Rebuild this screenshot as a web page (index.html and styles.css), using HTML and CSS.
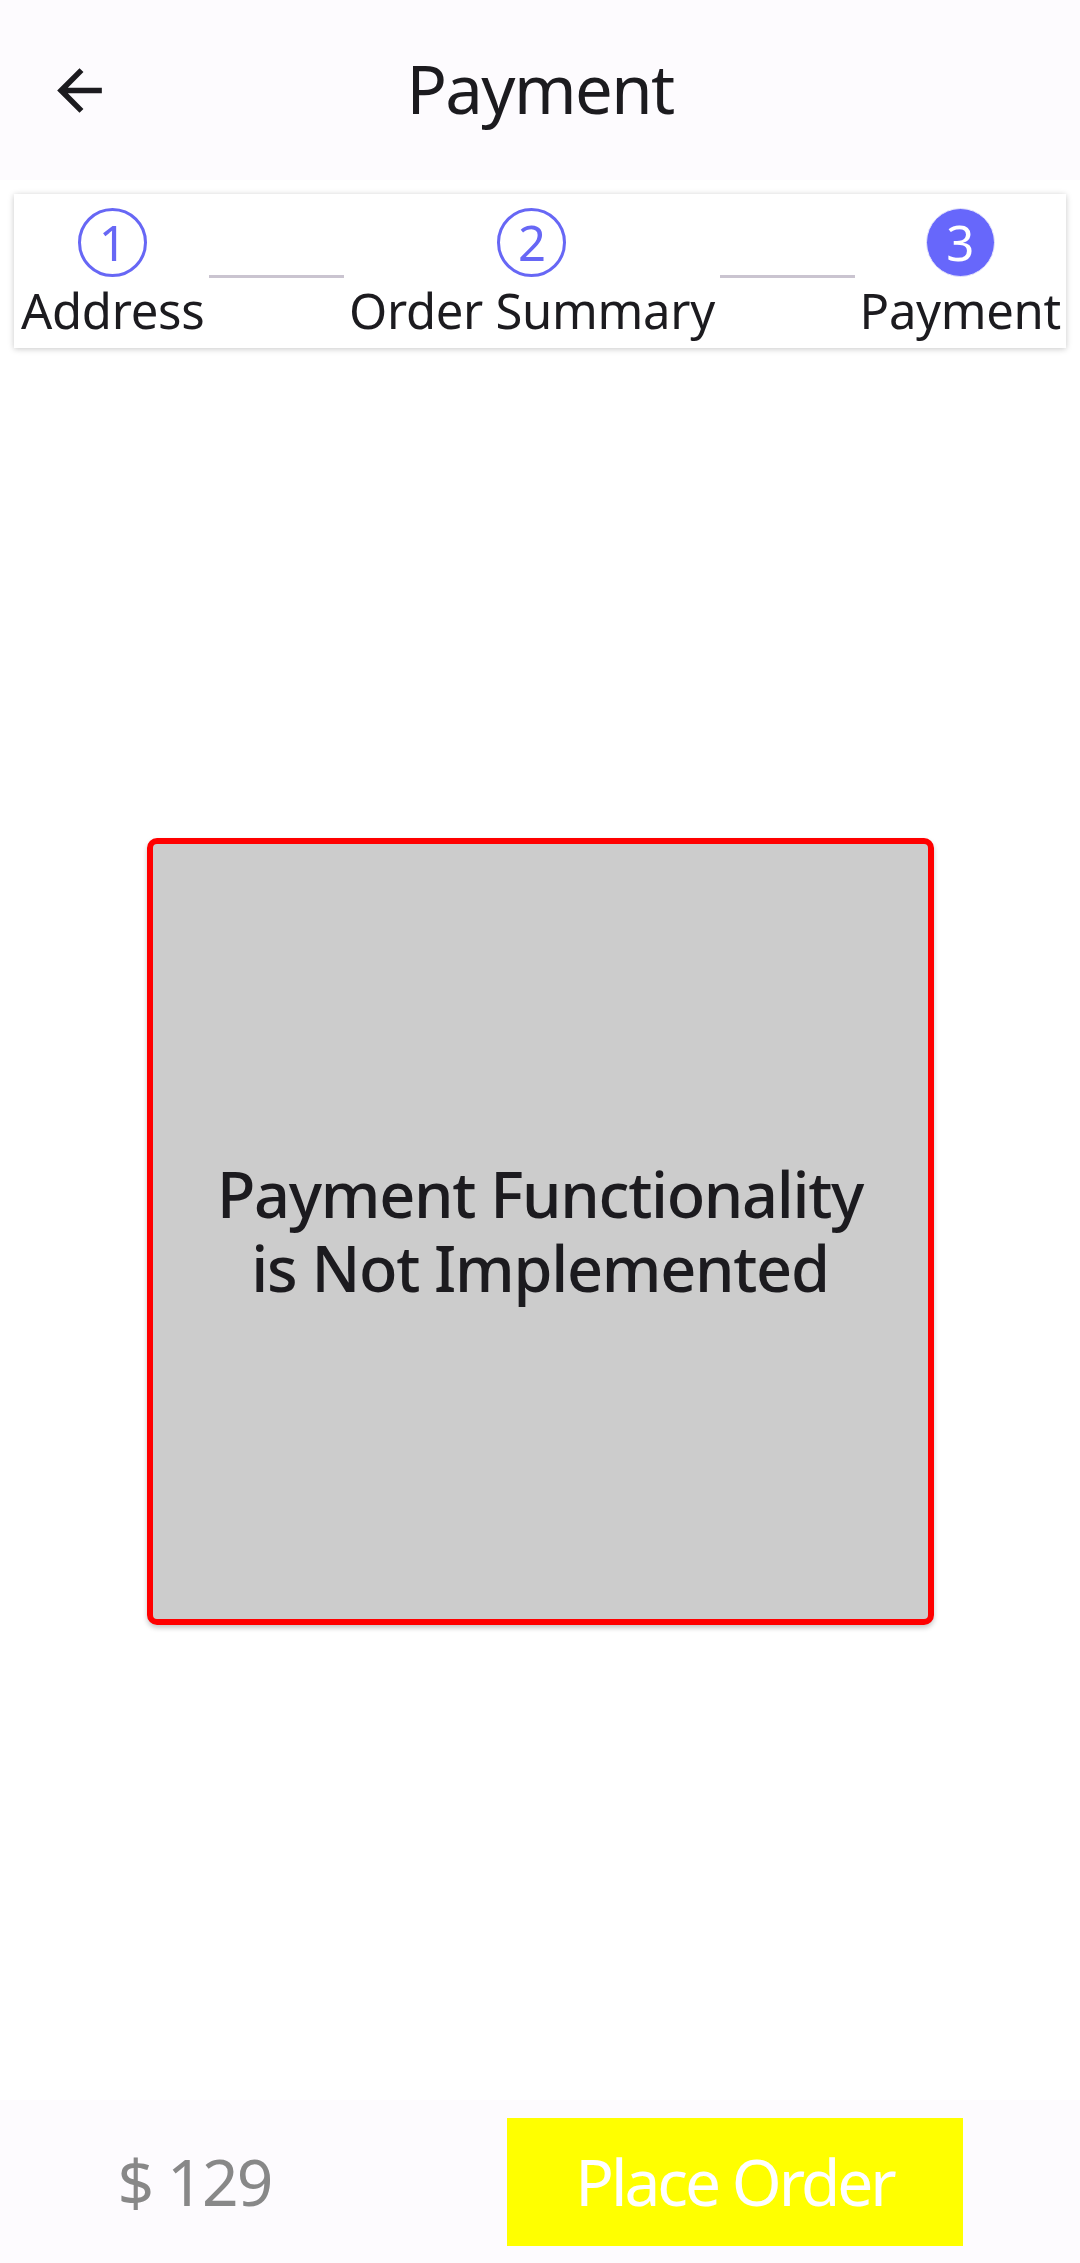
FILE: index.html
```html
<!DOCTYPE html>
<html>
<head>
<meta charset="utf-8">
<link rel="stylesheet" href="styles.css">
</head>
<body>
<div class="screen">
  <header class="topbar">
    <svg class="back" viewBox="0 0 24 24"><path d="M20 11H7.83l5.59-5.59L12 4l-8 8 8 8 1.41-1.41L7.83 13H20v-2z"/></svg>
    <div class="title">Payment</div>
  </header>
  <div class="stepper">
    <div class="step">
      <div class="circle">1</div>
      <div class="label">Address</div>
    </div>
    <div class="connector"></div>
    <div class="step">
      <div class="circle">2</div>
      <div class="label">Order Summary</div>
    </div>
    <div class="connector"></div>
    <div class="step">
      <div class="circle active">3</div>
      <div class="label">Payment</div>
    </div>
  </div>
  <main class="content">
    <div class="placeholder">
      <div class="notice">
        <span class="line">Payment Functionality</span>
        <span class="line">is Not Implemented</span>
      </div>
    </div>
  </main>
  <footer class="bottombar">
    <div class="price">$ 129</div>
    <button class="order">Place Order</button>
  </footer>
</div>
</body>
</html>
```
FILE: styles.css
```css
html, body {
  margin: 0;
  padding: 0;
  background: #ffffff;
}
body {
  font-family: "Noto Sans", "Roboto", sans-serif;
  color: #1c1b1f;
}
.screen {
  width: 1080px;
  height: 2263px;
  display: flex;
  flex-direction: column;
  overflow: hidden;
}
.topbar {
  height: 180px;
  flex: none;
  background: #fdfbfe;
  display: flex;
  align-items: center;
  justify-content: center;
  position: relative;
}
.back {
  position: absolute;
  left: 46px;
  top: 57px;
  width: 67px;
  height: 67px;
  fill: #1c1b1f;
}
.title {
  font-size: 67px;
  line-height: 1;
  letter-spacing: -1.6px;
  margin-top: -4px;
}
.stepper {
  flex: none;
  margin: 14px 14px 0;
  background: #ffffff;
  box-shadow: 0 1px 6px rgba(0,0,0,0.22);
  display: flex;
  align-items: flex-start;
  padding: 14px 5px 13px 7px;
}
.step {
  display: flex;
  flex-direction: column;
  align-items: center;
  flex: none;
}
.circle {
  width: 63px;
  height: 63px;
  border: 3px solid #6767f5;
  border-radius: 50%;
  color: #6767f5;
  font-size: 49px;
  line-height: 63px;
  text-align: center;
}
.circle.active {
  background: #6767fb;
  color: #ffffff;
  border-color: #e6e6fb;
  border-width: 1px;
  width: 67px;
  height: 67px;
  line-height: 67px;
}
.label {
  margin-top: 9px;
  font-size: 49px;
  line-height: 1;
  letter-spacing: -0.3px;
  white-space: nowrap;
}
.connector {
  flex: 1;
  height: 3px;
  margin: 67px 5px 0;
  background: #cac4d0;
}
.content {
  flex: 1;
  display: flex;
  align-items: center;
  justify-content: center;
  padding-top: 14px;
}
.placeholder {
  width: 775px;
  height: 775px;
  border: 6px solid #ff0000;
  border-radius: 10px;
  background: #cccccc;
  box-shadow: 0 3px 5px rgba(0,0,0,0.22);
  display: flex;
  align-items: center;
  justify-content: center;
}
.notice {
  display: flex;
  flex-direction: column;
  align-items: center;
  font-size: 63px;
  font-weight: 500;
  letter-spacing: -1.3px;
  color: #1c1b1f;
}
.line {
  display: block;
  height: 74px;
  line-height: 74px;
  white-space: nowrap;
}
.bottombar {
  flex: none;
  height: 163px;
  background: #fdfbfe;
  display: flex;
  align-items: center;
  justify-content: space-around;
}
.price {
  font-size: 64px;
  line-height: 1;
  letter-spacing: -1.8px;
  color: #888888;
}
.order {
  width: 456px;
  height: 128px;
  border: none;
  background: #ffff00;
  color: #ffffff;
  font-family: "Noto Sans", "Roboto", sans-serif;
  font-size: 64px;
  letter-spacing: -3px;
  padding: 0;
}
```
